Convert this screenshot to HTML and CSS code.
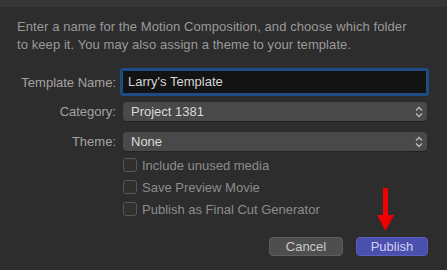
FILE: index.html
```html
<!DOCTYPE html>
<html lang="en">
<head>
    <meta charset="UTF-8">
    <title>Publish Template</title>
    <link rel="stylesheet" href="styles.css">
</head>
<body>
    <div class="titlebar"></div>
    <div class="sheet">
        <p class="intro">Enter a name for the Motion Composition, and choose which folder<br>to keep it. You may also assign a theme to your template.</p>

        <div class="form">
            <label class="label label-name">Template Name:</label>
            <div class="field">Larry's Template</div>

            <label class="label label-cat">Category:</label>
            <div class="popup popup-cat">
                <span>Project 1381</span>
                <svg class="stepper" width="8" height="12" viewBox="0 0 8 12"><path d="M1 4.5 L4 1.5 L7 4.5 M1 7.5 L4 10.5 L7 7.5" fill="none" stroke="#bdbdbd" stroke-width="1.3"/></svg>
            </div>

            <label class="label label-theme">Theme:</label>
            <div class="popup popup-theme">
                <span>None</span>
                <svg class="stepper" width="8" height="12" viewBox="0 0 8 12"><path d="M1 4.5 L4 1.5 L7 4.5 M1 7.5 L4 10.5 L7 7.5" fill="none" stroke="#bdbdbd" stroke-width="1.3"/></svg>
            </div>
        </div>

        <ul class="options">
            <li><span class="check"></span>Include unused media</li>
            <li><span class="check"></span>Save Preview Movie</li>
            <li><span class="check"></span>Publish as Final Cut Generator</li>
        </ul>

        <div class="buttons">
            <button class="btn btn-cancel">Cancel</button>
            <button class="btn btn-publish">Publish</button>
        </div>
    </div>

    <!-- red callout arrow -->
    <svg class="arrow" width="18" height="44" viewBox="0 0 18 44">
        <rect x="6" y="0" width="5" height="28" fill="#f00000"/>
        <polygon points="0,27 17,27 8.5,43" fill="#f00000"/>
    </svg>
</body>
</html>
```

FILE: styles.css
```css
body {
    margin: 0;
    width: 447px;
    height: 270px;
    overflow: hidden;
    background-color: #2d2d2d;
    font-family: "Liberation Sans", Arial, sans-serif;
    font-size: 13px;
    position: relative;
}

.titlebar {
    height: 7px;
    background-color: #363636;
}

.sheet {
    padding: 0 18px 0 17px;
}

.intro {
    margin: 11px 0 0 0;
    line-height: 18px;
    letter-spacing: 0.08px;
    white-space: nowrap;
    color: #9a9a9a;
}

.form {
    display: grid;
    grid-template-columns: 99px 1fr;
    column-gap: 4px;
    margin-top: 14px;
    align-items: center;
}

.label {
    text-align: right;
    color: #a3a3a3;
}

.field {
    height: 22px;
    line-height: 22px;
    padding-left: 5px;
    background-color: #131313;
    border: 3px solid #1f4b84;
    border-radius: 3px;
    color: #d6d6d6;
}

.popup {
    position: relative;
    height: 19px;
    line-height: 19px;
    margin: 0 2px 0 3px;
    padding-left: 8px;
    background-color: #494949;
    border-radius: 4px;
    box-shadow: 0 1px 0 #232323;
    color: #dadada;
}

.popup-cat {
    margin-top: 6px;
}

.label-cat {
    margin-top: 6px;
}

.popup-theme,
.label-theme {
    margin-top: 11px;
}

.stepper {
    position: absolute;
    right: 4px;
    top: 4px;
}

.options {
    list-style: none;
    margin: 3px 0 0 106px;
    padding: 0;
}

.options li {
    display: flex;
    align-items: center;
    height: 22px;
    color: #8c8c8c;
}

.check {
    width: 12px;
    height: 12px;
    margin-right: 5px;
    border: 1px solid #575757;
    border-radius: 3px;
    background-color: #303030;
}

.buttons {
    display: flex;
    justify-content: flex-end;
    gap: 13px;
    margin-top: 17px;
    padding-right: 1px;
}

.btn {
    height: 19px;
    padding: 0;
    border-radius: 4px;
    font-family: "Liberation Sans", Arial, sans-serif;
    font-size: 13px;
}

.btn-cancel {
    width: 74px;
    background-color: #4e4e4e;
    border: 1px solid #5e5e5e;
    color: #c9c9c9;
}

.btn-publish {
    width: 72px;
    background-color: #4b4fae;
    border: 1px solid #5a5fc0;
    color: #cfd1f0;
}

.arrow {
    position: absolute;
    left: 377px;
    top: 188px;
}
```
